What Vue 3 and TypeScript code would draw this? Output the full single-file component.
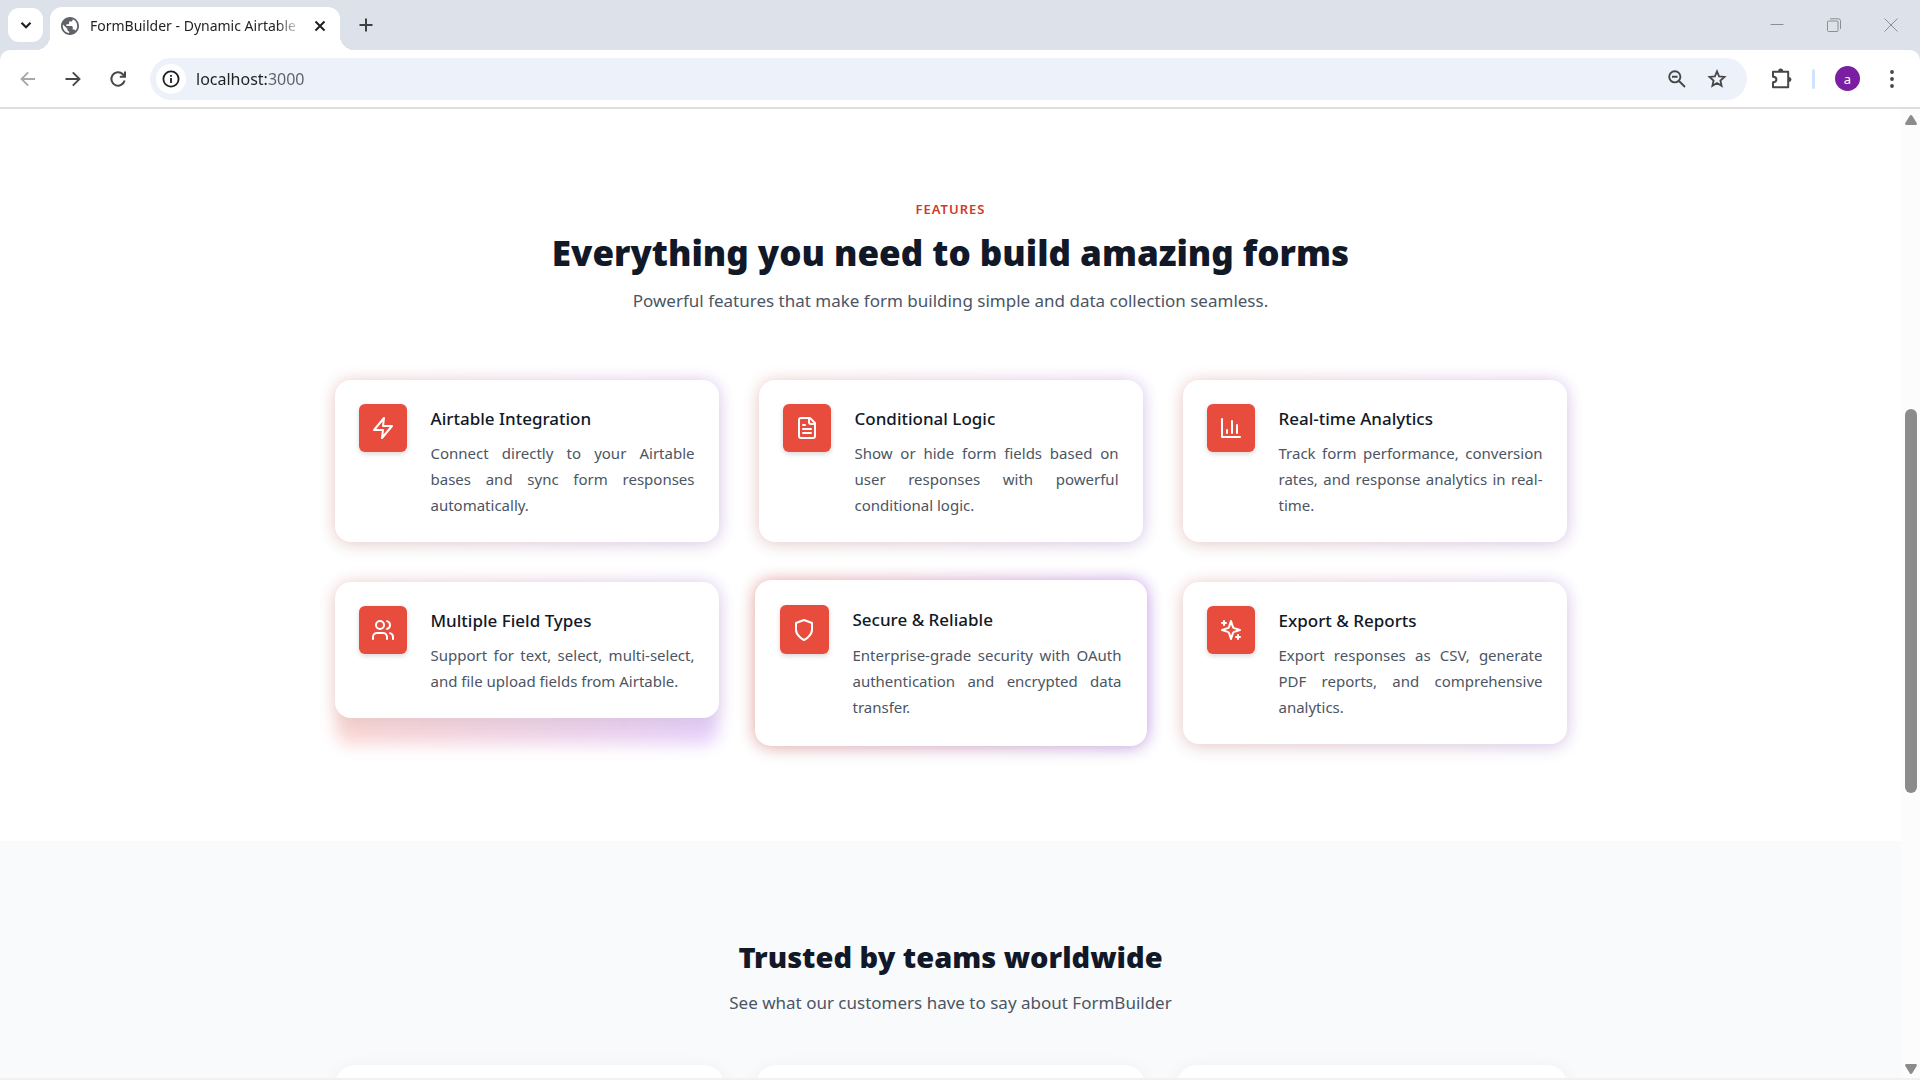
<script setup lang="ts">
import { ref } from 'vue'

interface Feature {
  title: string
  text: string
  paths: string[]
  raised?: boolean
}

const address = ref('localhost:3000')

const features: Feature[] = [
  {
    title: 'Airtable Integration',
    text: 'Connect directly to your Airtable bases and sync form responses automatically.',
    paths: ['M13 2 3 14h9l-1 8 10-12h-9l1-8z'],
  },
  {
    title: 'Conditional Logic',
    text: 'Show or hide form fields based on user responses with powerful conditional logic.',
    paths: [
      'M15 2H6a2 2 0 0 0-2 2v16a2 2 0 0 0 2 2h12a2 2 0 0 0 2-2V7Z',
      'M14 2v4a2 2 0 0 0 2 2h4',
      'M10 9H8',
      'M16 13H8',
      'M16 17H8',
    ],
  },
  {
    title: 'Real-time Analytics',
    text: 'Track form performance, conversion rates, and response analytics in real-time.',
    paths: ['M3 3v18h18', 'M18 17V9', 'M13 17V5', 'M8 17v-3'],
  },
  {
    title: 'Multiple Field Types',
    text: 'Support for text, select, multi-select, and file upload fields from Airtable.',
    paths: [
      'M16 21v-2a4 4 0 0 0-4-4H6a4 4 0 0 0-4 4v2',
      'M13 7a4 4 0 1 1-8 0 4 4 0 0 1 8 0Z',
      'M22 21v-2a4 4 0 0 0-3-3.87',
      'M16 3.13a4 4 0 0 1 0 7.75',
    ],
  },
  {
    title: 'Secure & Reliable',
    text: 'Enterprise-grade security with OAuth authentication and encrypted data transfer.',
    paths: ['M12 22s8-4 8-10V5l-8-3-8 3v7c0 6 8 10 8 10'],
    raised: true,
  },
  {
    title: 'Export & Reports',
    text: 'Export responses as CSV, generate PDF reports, and comprehensive analytics.',
    paths: [
      'm12 3-1.912 5.813a2 2 0 0 1-1.275 1.275L3 12l5.813 1.912a2 2 0 0 1 1.275 1.275L12 21l1.912-5.813a2 2 0 0 1 1.275-1.275L21 12l-5.813-1.912a2 2 0 0 1-1.275-1.275L12 3Z',
      'M5 3v4',
      'M19 17v4',
      'M3 5h4',
      'M17 19h4',
    ],
  },
]
</script>

<template>
  <div class="window">
    <header class="tabstrip">
      <button class="tab-search" type="button" aria-label="Search tabs">
        <svg width="16" height="16" viewBox="0 0 16 16" fill="none" stroke="#1f2023" stroke-width="2.2">
          <path d="M3.5 5.8 8 10.2l4.500-4.400" />
        </svg>
      </button>
      <div class="tab">
        <svg class="favicon" width="18" height="18" viewBox="2 2 20 20">
          <path
            fill="#5f6368"
            d="M12 2C6.480 2 2 6.480 2 12s4.480 10 10 10 10-4.480 10-10S17.520 2 12 2zm-1 17.930c-3.950-.490-7-3.850-7-7.930 0-.620.080-1.210.210-1.790L9 15v1c0 1.100.900 2 2 2v1.930zm6.900-2.540c-.260-.810-1-1.390-1.900-1.390h-1v-3c0-.550-.450-1-1-1H8v-2h2c.550 0 1-.450 1-1V7h2c1.100 0 2-.900 2-2v-.410c2.930 1.190 5 4.060 5 7.410 0 2.080-.800 3.970-2.100 5.390z"
          />
        </svg>
        <span class="tab-title">FormBuilder - Dynamic Airtable</span>
        <button class="icon-button tab-close" type="button" aria-label="Close tab">
          <svg width="12" height="12" viewBox="0 0 12 12" stroke="#1f2023" stroke-width="2">
            <path d="M1.500 1.500l9 9M10.500 1.500l-9 9" />
          </svg>
        </button>
      </div>
      <button class="icon-button new-tab" type="button" aria-label="New tab">
        <svg width="14" height="14" viewBox="0 0 14 14" stroke="#3c4043" stroke-width="2">
          <path d="M7 .5v13M.5 7h13" />
        </svg>
      </button>
      <div class="window-controls">
        <button class="icon-button" type="button" aria-label="Minimize">
          <svg width="14" height="14" viewBox="0 0 14 14" stroke="#8b8e93"><path d="M.5 6.500h13" /></svg>
        </button>
        <button class="icon-button" type="button" aria-label="Restore">
          <svg width="14" height="14" viewBox="0 0 14 14" fill="none" stroke="#8b8e93">
            <rect x=".5" y="3" width="10.500" height="10.500" rx="1" />
            <path d="M3 .8h8.500a2 2 0 0 1 2 2V11" />
          </svg>
        </button>
        <button class="icon-button" type="button" aria-label="Close">
          <svg width="14" height="14" viewBox="0 0 14 14" stroke="#8b8e93"><path d="M.5.5l13 13M13.500.5l-13 13" /></svg>
        </button>
      </div>
    </header>

    <div class="toolbar-wrap">
      <nav class="toolbar" aria-label="Browser toolbar">
        <button class="icon-button" type="button" aria-label="Back">
          <svg width="16" height="16" viewBox="0 0 16 16" fill="none" stroke="#a6a8ab" stroke-width="1.800">
            <path d="M15 8H2M8.200 1.300 1.500 8l6.700 6.700" />
          </svg>
        </button>
        <button class="icon-button" type="button" aria-label="Forward">
          <svg width="16" height="16" viewBox="0 0 16 16" fill="none" stroke="#474747" stroke-width="1.900">
            <path d="M.5 8H14M7.800 1.300 14.500 8l-6.700 6.700" />
          </svg>
        </button>
        <button class="icon-button" type="button" aria-label="Reload">
          <svg width="18" height="18" viewBox="0 0 18 18" fill="none" stroke="#474747" stroke-width="2">
            <path d="M15.600 10.500A6.700 6.700 0 1 1 13.800 4.200L16 6.500M16 1.500v5.200h-5.200" />
          </svg>
        </button>
        <div class="omnibox">
          <button class="site-info" type="button" aria-label="View site information">
            <svg width="18" height="18" viewBox="0 0 18 18" fill="none" stroke="#1f2023" stroke-width="1.800">
              <circle cx="9" cy="9" r="7.600" />
              <path d="M9 8v5M9 5v1.800" />
            </svg>
          </button>
          <input v-model="address" class="address" type="text" aria-label="Address bar" spellcheck="false" />
          <button class="icon-button" type="button" aria-label="Zoom">
            <svg width="18" height="18" viewBox="0 0 18 18" fill="none" stroke="#474747" stroke-width="1.900">
              <circle cx="6.800" cy="6.800" r="5.600" />
              <path d="M11 11l6 6M4 6.800h5.600" />
            </svg>
          </button>
          <button class="icon-button" type="button" aria-label="Bookmark this tab">
            <svg width="20" height="20" viewBox="0 0 20 20" fill="none" stroke="#474747" stroke-width="1.800">
              <path d="m10 2.400 2.100 5 5.400.5-4.100 3.600 1.200 5.300L10 14l-4.600 2.800 1.200-5.300-4.100-3.600 5.400-.5z" />
            </svg>
          </button>
        </div>
        <button class="icon-button extensions" type="button" aria-label="Extensions">
          <svg width="21" height="21" viewBox="0 0 21 21" fill="none" stroke="#474747" stroke-width="2">
            <path d="M2 3.800h15.200v15.400H2v-5c2.600 0 3.400-1 3.400-2.700S4.600 8.800 2 8.800z" stroke-linejoin="round" />
            <path d="M7.200 3a2.500 2.500 0 0 1 5 0zM18 9a2.500 2.500 0 0 1 0 5z" fill="#474747" stroke="none" />
          </svg>
        </button>
        <span class="divider"></span>
        <button class="avatar" type="button" aria-label="Profile">a</button>
        <button class="icon-button menu" type="button" aria-label="Menu">
          <svg width="4" height="18" viewBox="0 0 4 18" fill="#474747">
            <circle cx="2" cy="2" r="1.900" />
            <circle cx="2" cy="9" r="1.900" />
            <circle cx="2" cy="16" r="1.900" />
          </svg>
        </button>
      </nav>
    </div>

    <div class="viewport">
      <main class="page">
        <section class="features">
          <div class="container">
            <div class="heading">
              <p class="eyebrow">FEATURES</p>
              <h2 class="title-large">Everything you need to build amazing forms</h2>
              <p class="lead">Powerful features that make form building simple and data collection seamless.</p>
            </div>
            <div class="feature-grid">
              <div v-for="f in features" :key="f.title" class="feature" :class="{ raised: f.raised }">
                <article class="card">
                  <div class="card-icon">
                    <svg
                      width="24"
                      height="24"
                      viewBox="0 0 24 24"
                      fill="none"
                      stroke="#fff"
                      stroke-width="2"
                      stroke-linecap="round"
                      stroke-linejoin="round"
                    >
                      <path v-for="d in f.paths" :key="d" :d="d" />
                    </svg>
                  </div>
                  <div class="card-body">
                    <h3>{{ f.title }}</h3>
                    <p>{{ f.text }}</p>
                  </div>
                </article>
              </div>
            </div>
          </div>
        </section>

        <section class="testimonials">
          <div class="container">
            <div class="heading">
              <h2 class="title-medium">Trusted by teams worldwide</h2>
              <p class="lead">See what our customers have to say about FormBuilder</p>
            </div>
            <div class="quote-grid">
              <div v-for="n in 3" :key="n" class="quote"></div>
            </div>
          </div>
        </section>
      </main>
      <div class="scrollbar" aria-hidden="true">
        <svg width="14" height="10" viewBox="0 0 14 10" fill="#8b8b8b">
          <path d="M7 0c.6 0 1 .3 1.400.9L12.700 8c.5 1 .1 2-1 2H2.300c-1.100 0-1.500-1-1-2L5.600.9C6 .3 6.400 0 7 0z" />
        </svg>
        <div class="track"><div class="thumb"></div></div>
        <svg width="14" height="10" viewBox="0 0 14 10" fill="#8b8b8b">
          <path d="M7 10c.6 0 1-.3 1.400-.9L12.700 2c.5-1 .1-2-1-2H2.300c-1.100 0-1.500 1-1 2l4.300 7.100c.4.600.8.9 1.400.9z" />
        </svg>
      </div>
    </div>
  </div>
</template>

<style>
body {
  margin: 0;
}
</style>

<style scoped>
* {
  box-sizing: border-box;
}

.window {
  display: flex;
  flex-direction: column;
  height: 100vh;
  overflow: hidden;
  background: #fff;
  font-family: 'Noto Sans', 'Open Sans', sans-serif;
  color: #111827;
}

button {
  border: 0;
  padding: 0;
  background: none;
  font-family: inherit;
}

h2,
h3,
p {
  margin: 0;
}

.icon-button {
  display: flex;
  align-items: center;
  justify-content: center;
  flex: none;
  width: 36px;
  height: 36px;
}

/* Tab strip */
.tabstrip {
  display: flex;
  align-items: center;
  flex: none;
  height: 50px;
  padding-left: 8px;
  background: #dde1e9;
}

.tab-search {
  display: flex;
  align-items: center;
  justify-content: center;
  width: 35px;
  height: 34px;
  border-radius: 11px;
  background: #fff;
}

.tab {
  position: relative;
  display: flex;
  align-items: center;
  align-self: flex-end;
  width: 290px;
  height: 43px;
  margin-left: 7px;
  padding: 0 2px 6px 11px;
  border-radius: 12px 12px 0 0;
  background: #fff;
}

.tab::before,
.tab::after {
  content: '';
  position: absolute;
  bottom: 0;
  width: 14px;
  height: 14px;
}

.tab::before {
  right: 100%;
  background: radial-gradient(circle at 0 0, transparent 14px, #fff 14px);
}

.tab::after {
  left: 100%;
  background: radial-gradient(circle at 100% 0, transparent 14px, #fff 14px);
}

.favicon {
  flex: none;
}

.tab-title {
  flex: 1;
  margin-left: 11px;
  white-space: nowrap;
  font-size: 14px;
  line-height: 20px;
  color: #1f2023;
  mask-image: linear-gradient(to right, #000 88%, transparent);
}

.new-tab {
  margin-left: 8px;
}

.window-controls {
  display: flex;
  gap: 21px;
  margin-left: auto;
  padding-right: 11px;
}

/* Toolbar */
.toolbar-wrap {
  flex: none;
  background: #dde1e9;
}

.toolbar {
  display: flex;
  align-items: center;
  gap: 9px;
  height: 59px;
  padding: 0 11px 0 10px;
  border-bottom: 2px solid #dedede;
  border-radius: 10px 10px 0 0;
  background: #fff;
}

.omnibox {
  display: flex;
  align-items: center;
  flex: 1;
  gap: 4px;
  height: 42px;
  margin-left: 5px;
  padding: 0 12px 0 6px;
  border-radius: 21px;
  background: #ecf1fa;
}

.site-info {
  display: flex;
  align-items: center;
  justify-content: center;
  flex: none;
  width: 30px;
  height: 30px;
  border-radius: 50%;
  background: #fff;
}

.address {
  flex: 1;
  min-width: 0;
  height: 30px;
  margin-left: 6px;
  padding: 0;
  border: 0;
  outline: 0;
  background: linear-gradient(to right, #1f2023 73px, #5b5f66 73px);
  background-clip: text;
  color: transparent;
  font-family: inherit;
  font-size: 16px;
}

.extensions {
  margin-left: 7px;
}

.divider {
  width: 3px;
  height: 20px;
  margin-left: 4px;
  border-radius: 2px;
  background: #d3e3fd;
}

.avatar {
  width: 25px;
  height: 25px;
  margin-left: 11px;
  border-radius: 50%;
  background: #7b1fa2;
  color: #fff;
  font-size: 13px;
  line-height: 24px;
}

.menu {
  margin-right: -1px;
  margin-left: 5px;
}

/* Page */
.viewport {
  display: flex;
  flex: 1;
  min-height: 0;
  border-bottom: 2px solid #f1f1f1;
}

.page {
  flex: 1;
  min-width: 0;
  overflow: hidden;
}

.container {
  max-width: 1232px;
  margin: 0 auto;
}

.heading {
  text-align: center;
}

.features {
  padding: 90px 0 96px;
}

.eyebrow {
  margin-bottom: 12px;
  font-size: 13px;
  font-weight: 600;
  line-height: 20px;
  letter-spacing: 1px;
  color: #d03a2b;
}

.title-large {
  margin-bottom: 12px;
  font-size: 35px;
  font-weight: 900;
  line-height: 44px;
}

.title-medium {
  margin-bottom: 12px;
  font-size: 29px;
  font-weight: 900;
  line-height: 40px;
}

.lead {
  font-size: 17px;
  line-height: 28px;
  color: #4b5563;
}

.feature-grid {
  display: grid;
  grid-template-columns: repeat(3, minmax(0, 1fr));
  gap: 40px;
  margin-top: 65px;
}

.feature {
  position: relative;
}

.feature::before {
  content: '';
  position: absolute;
  inset: 0;
  border-radius: 16px;
  background: linear-gradient(to right, #e74c3c, #9333ea);
  opacity: 0.22;
  filter: blur(8px);
}

.card {
  position: relative;
  display: flex;
  align-items: flex-start;
  gap: 24px;
  padding: 24px;
  border-radius: 16px;
  background: #fff;
  box-shadow: 0 4px 20px rgba(0, 0, 0, 0.08);
}

.card-icon {
  display: flex;
  align-items: center;
  justify-content: center;
  flex: none;
  width: 48px;
  height: 48px;
  border-radius: 6px;
  background: #e74c3c;
  box-shadow: 0 2px 5px rgba(0, 0, 0, 0.16);
}

.card-body {
  flex: 1;
  min-width: 0;
}

.card-body h3 {
  margin-bottom: 6px;
  font-size: 17px;
  font-weight: 500;
  line-height: 30px;
}

.card-body p {
  font-size: 15px;
  line-height: 26px;
  text-align: justify;
  color: #4b5563;
}

.raised {
  margin: -2px -4px -1px;
}

.raised::before {
  opacity: 0.44;
}

.raised .card {
  padding: 25px 25px 26px;
}

.raised .card-icon {
  width: 49px;
  height: 49px;
}

.raised h3 {
  margin-bottom: 7px;
}

/* Testimonials */
.testimonials {
  padding: 96px 0;
  background: #f9fafc;
}

.quote-grid {
  display: grid;
  grid-template-columns: repeat(3, minmax(0, 1fr));
  gap: 32px;
  margin-top: 48px;
}

.quote {
  height: 240px;
  border-radius: 20px;
  background: #fff;
  box-shadow: 0 4px 20px rgba(0, 0, 0, 0.06);
}

/* Scrollbar */
.scrollbar {
  display: flex;
  flex-direction: column;
  align-items: center;
  flex: none;
  width: 19px;
  padding: 6px 0 4px;
  background: #fcfcfc;
}

.track {
  display: flex;
  flex: 1;
  flex-direction: column;
  width: 12px;
}

.track::before {
  content: '';
  flex: 284;
}

.track::after {
  content: '';
  flex: 271;
}

.thumb {
  flex: 384;
  border-radius: 6px;
  background: #8b8b8b;
}
</style>
